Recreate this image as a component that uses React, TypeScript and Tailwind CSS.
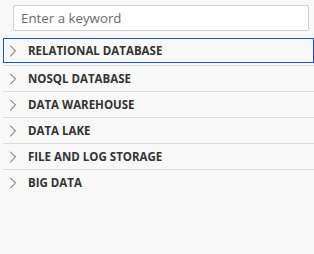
import { ChevronRight } from 'lucide-react';

const categories = [
  'RELATIONAL DATABASE',
  'NOSQL DATABASE',
  'DATA WAREHOUSE',
  'DATA LAKE',
  'FILE AND LOG STORAGE',
  'BIG DATA',
];

export default function App() {
  return (
    <div className="w-[314px] h-[254px] bg-[#f8f8f8] overflow-hidden" style={{ fontFamily: '"Open Sans", "Noto Sans", sans-serif' }}>
      <div className="pt-[5px] pl-[13px] pr-[5px]">
        <input
          type="text"
          placeholder="Enter a keyword"
          className="w-full h-[26px] bg-white border border-[#cfcfcf] rounded-[2px] px-[7px] text-[13.3px] text-[#333] placeholder:text-[#6b6b6b] outline-none"
        />
      </div>
      <ul className="mt-[7px] pl-[3px]">
        {categories.map((name, i) => (
          <li
            key={name}
            className={i === 0 ? 'h-[27px]' : 'h-[26px] border-t border-[#dedede]'}
          >
            <div
              className={
                'flex items-center ' +
                (i === 0 ? 'h-[25px] border border-[#1f4fd6]' : 'h-full pl-px')
              }
            >
              <ChevronRight size={20} strokeWidth={1.1} className="text-[#444] -ml-px" />
              <span className="ml-[5px] text-[11.5px] font-bold text-[#333]">{name}</span>
            </div>
          </li>
        ))}
      </ul>
    </div>
  );
}
